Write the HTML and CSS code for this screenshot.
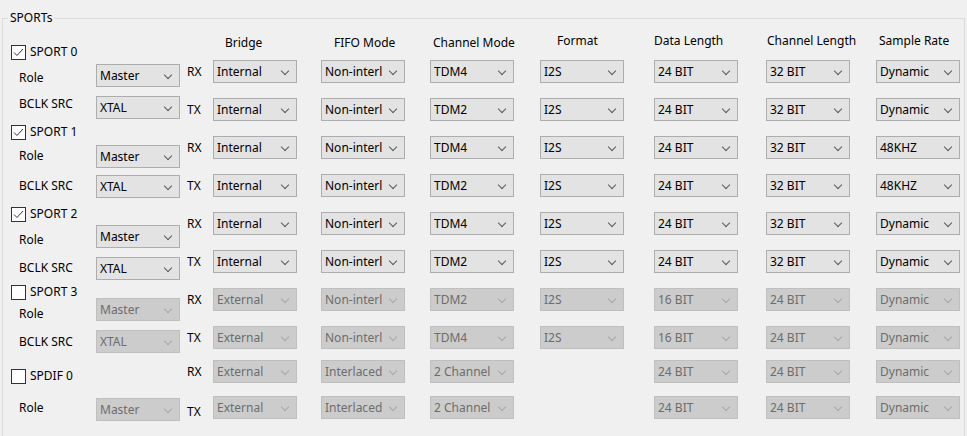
FILE: index.html
```html
<!DOCTYPE html>
<html>
<head>
<meta charset="utf-8">
<link rel="stylesheet" href="styles.css">
</head>
<body>
<div class="group">
  <div class="group-title">SPORTs</div>
  <div class="group-body">
    <div class="left-labels">
      <div class="chk"><span class="box"><svg viewBox="0 0 13 13" width="13" height="13"><polyline points="2,6.5 5,9.5 11,3" /></svg></span>SPORT 0</div>
      <div class="lbl">Role</div>
      <div class="lbl">BCLK SRC</div>
      <div class="chk"><span class="box"><svg viewBox="0 0 13 13" width="13" height="13"><polyline points="2,6.5 5,9.5 11,3" /></svg></span>SPORT 1</div>
      <div class="lbl">Role</div>
      <div class="lbl">BCLK SRC</div>
      <div class="chk"><span class="box"><svg viewBox="0 0 13 13" width="13" height="13"><polyline points="2,6.5 5,9.5 11,3" /></svg></span>SPORT 2</div>
      <div class="lbl">Role</div>
      <div class="lbl">BCLK SRC</div>
      <div class="chk"><span class="box"></span>SPORT 3</div>
      <div class="lbl">Role</div>
      <div class="lbl">BCLK SRC</div>
      <div class="chk"><span class="box"></span>SPDIF 0</div>
      <div class="lbl">Role</div>
    </div>
    <div class="left-combos">
      <div class="combo"><span>Master</span><i></i></div>
      <div class="combo"><span>XTAL</span><i></i></div>
      <div class="combo"><span>Master</span><i></i></div>
      <div class="combo"><span>XTAL</span><i></i></div>
      <div class="combo"><span>Master</span><i></i></div>
      <div class="combo"><span>XTAL</span><i></i></div>
      <div class="combo off"><span>Master</span><i></i></div>
      <div class="combo off"><span>XTAL</span><i></i></div>
      <div class="combo off"><span>Master</span><i></i></div>
    </div>
    <div class="matrix">
      <div></div>
      <div class="h h-bridge">Bridge</div>
      <div class="h h-fifo">FIFO Mode</div>
      <div class="h h-chmode">Channel Mode</div>
      <div class="h h-format">Format</div>
      <div class="h h-dlen">Data Length</div>
      <div class="h h-clen">Channel Length</div>
      <div class="h h-rate">Sample Rate</div>

      <div class="dir">RX</div>
      <div class="combo"><span>Internal</span><i></i></div>
      <div class="combo"><span>Non-interl</span><i></i></div>
      <div class="combo"><span>TDM4</span><i></i></div>
      <div class="combo"><span>I2S</span><i></i></div>
      <div class="combo"><span>24 BIT</span><i></i></div>
      <div class="combo"><span>32 BIT</span><i></i></div>
      <div class="combo"><span>Dynamic</span><i></i></div>

      <div class="dir">TX</div>
      <div class="combo"><span>Internal</span><i></i></div>
      <div class="combo"><span>Non-interl</span><i></i></div>
      <div class="combo"><span>TDM2</span><i></i></div>
      <div class="combo"><span>I2S</span><i></i></div>
      <div class="combo"><span>24 BIT</span><i></i></div>
      <div class="combo"><span>32 BIT</span><i></i></div>
      <div class="combo"><span>Dynamic</span><i></i></div>

      <div class="dir">RX</div>
      <div class="combo"><span>Internal</span><i></i></div>
      <div class="combo"><span>Non-interl</span><i></i></div>
      <div class="combo"><span>TDM4</span><i></i></div>
      <div class="combo"><span>I2S</span><i></i></div>
      <div class="combo"><span>24 BIT</span><i></i></div>
      <div class="combo"><span>32 BIT</span><i></i></div>
      <div class="combo"><span>48KHZ</span><i></i></div>

      <div class="dir">TX</div>
      <div class="combo"><span>Internal</span><i></i></div>
      <div class="combo"><span>Non-interl</span><i></i></div>
      <div class="combo"><span>TDM2</span><i></i></div>
      <div class="combo"><span>I2S</span><i></i></div>
      <div class="combo"><span>24 BIT</span><i></i></div>
      <div class="combo"><span>32 BIT</span><i></i></div>
      <div class="combo"><span>48KHZ</span><i></i></div>

      <div class="dir">RX</div>
      <div class="combo"><span>Internal</span><i></i></div>
      <div class="combo"><span>Non-interl</span><i></i></div>
      <div class="combo"><span>TDM4</span><i></i></div>
      <div class="combo"><span>I2S</span><i></i></div>
      <div class="combo"><span>24 BIT</span><i></i></div>
      <div class="combo"><span>32 BIT</span><i></i></div>
      <div class="combo"><span>Dynamic</span><i></i></div>

      <div class="dir">TX</div>
      <div class="combo"><span>Internal</span><i></i></div>
      <div class="combo"><span>Non-interl</span><i></i></div>
      <div class="combo"><span>TDM2</span><i></i></div>
      <div class="combo"><span>I2S</span><i></i></div>
      <div class="combo"><span>24 BIT</span><i></i></div>
      <div class="combo"><span>32 BIT</span><i></i></div>
      <div class="combo"><span>Dynamic</span><i></i></div>

      <div class="dir">RX</div>
      <div class="combo off"><span>External</span><i></i></div>
      <div class="combo off"><span>Non-interl</span><i></i></div>
      <div class="combo off"><span>TDM2</span><i></i></div>
      <div class="combo off"><span>I2S</span><i></i></div>
      <div class="combo off"><span>16 BIT</span><i></i></div>
      <div class="combo off"><span>24 BIT</span><i></i></div>
      <div class="combo off"><span>Dynamic</span><i></i></div>

      <div class="dir">TX</div>
      <div class="combo off"><span>External</span><i></i></div>
      <div class="combo off"><span>Non-interl</span><i></i></div>
      <div class="combo off"><span>TDM4</span><i></i></div>
      <div class="combo off"><span>I2S</span><i></i></div>
      <div class="combo off"><span>16 BIT</span><i></i></div>
      <div class="combo off"><span>24 BIT</span><i></i></div>
      <div class="combo off"><span>Dynamic</span><i></i></div>

      <div class="dir">RX</div>
      <div class="combo off"><span>External</span><i></i></div>
      <div class="combo off"><span>Interlaced</span><i></i></div>
      <div class="combo off"><span>2 Channel</span><i></i></div>
      <div></div>
      <div class="combo off"><span>24 BIT</span><i></i></div>
      <div class="combo off"><span>24 BIT</span><i></i></div>
      <div class="combo off"><span>Dynamic</span><i></i></div>

      <div class="dir dir-low">TX</div>
      <div class="combo off"><span>External</span><i></i></div>
      <div class="combo off"><span>Interlaced</span><i></i></div>
      <div class="combo off"><span>2 Channel</span><i></i></div>
      <div></div>
      <div class="combo off"><span>24 BIT</span><i></i></div>
      <div class="combo off"><span>24 BIT</span><i></i></div>
      <div class="combo off"><span>Dynamic</span><i></i></div>
    </div>
  </div>
</div>
</body>
</html>
```
FILE: styles.css
```css
* { box-sizing: border-box; }
html, body {
  margin: 0;
  padding: 0;
  background: #f0f0f0;
  overflow: hidden;
}
body {
  font-family: "Noto Sans", "Open Sans", sans-serif;
  font-size: 12px;
  color: #000;
  width: 967px;
  height: 436px;
}
.group {
  position: relative;
  margin: 18px 2px 0 2px;
  height: 418px;
  border: 1px solid #dcdcdc;
  border-bottom: none;
}
.group-title {
  position: absolute;
  top: -9px;
  left: 5px;
  padding: 0 2px;
  line-height: 16px;
  background: #f0f0f0;
}
.group-body {
  display: flex;
  align-items: flex-start;
  padding-left: 8px;
}

/* left: checkbox + labels */
.left-labels {
  width: 85px;
  margin-top: 25px;
  display: flex;
  flex-direction: column;
}
.left-labels > div { height: 16px; line-height: 16px; white-space: nowrap; }
.left-labels > :nth-child(2) { margin-top: 10px; }
.left-labels > :nth-child(3) { margin-top: 10px; }
.left-labels > :nth-child(4) { margin-top: 12px; }
.left-labels > :nth-child(5) { margin-top: 8px; }
.left-labels > :nth-child(6) { margin-top: 14px; }
.left-labels > :nth-child(7) { margin-top: 12px; }
.left-labels > :nth-child(8) { margin-top: 10px; }
.left-labels > :nth-child(9) { margin-top: 12px; }
.left-labels > :nth-child(10) { margin-top: 8px; }
.left-labels > :nth-child(11) { margin-top: 6px; }
.left-labels > :nth-child(12) { margin-top: 12px; }
.left-labels > :nth-child(13) { margin-top: 18px; }
.left-labels > :nth-child(14) { margin-top: 16px; }

.chk {
  display: flex;
  align-items: center;
}
.box {
  width: 15px;
  height: 15px;
  border: 1px solid #333;
  background: #fff;
  margin-right: 4px;
  display: flex;
}
.box svg { display: block; }
.box polyline {
  fill: none;
  stroke: #333;
  stroke-width: 1;
}
.lbl { padding-left: 8px; }

/* left combos */
.left-combos {
  width: 84px;
  margin-top: 45px;
  display: flex;
  flex-direction: column;
}
.left-combos > :nth-child(2) { margin-top: 9px; }
.left-combos > :nth-child(3) { margin-top: 26px; }
.left-combos > :nth-child(4) { margin-top: 7px; }
.left-combos > :nth-child(5) { margin-top: 27px; }
.left-combos > :nth-child(6) { margin-top: 9px; }
.left-combos > :nth-child(7) { margin-top: 18px; }
.left-combos > :nth-child(8) { margin-top: 9px; }
.left-combos > :nth-child(9) { margin-top: 45px; }

/* combobox */
.combo {
  position: relative;
  width: 84px;
  height: 23px;
  border: 1px solid #adadad;
  background: #e3e3e3;
  display: flex;
  align-items: center;
  padding-left: 3px;
  line-height: 16px;
  white-space: nowrap;
}
.combo i {
  position: absolute;
  right: 8px;
  top: 7px;
  width: 6px;
  height: 6px;
  border-right: 1px solid #5a5a5a;
  border-bottom: 1px solid #5a5a5a;
  transform: rotate(45deg);
}
.combo.off {
  background: #cccccc;
  border-color: #bfbfbf;
  color: #6d6d6d;
}
.combo.off i {
  border-color: #a8a8a8;
}

/* matrix */
.matrix {
  margin-left: 7px;
  margin-top: 14px;
  display: grid;
  grid-template-columns: 26px 108px 109px 110px 114px 112px 110px 84px;
  grid-template-rows: 27px repeat(7, 38px) 34px 36px 23px;
  align-items: start;
}
.h { line-height: 16px; white-space: nowrap; }
.h-bridge { padding: 2px 0 0 12px; }
.h-fifo { padding: 2px 0 0 13px; }
.h-chmode { padding: 2px 0 0 3px; }
.h-format { padding: 0 0 0 17px; }
.h-dlen { padding: 0 0 0 0; }
.h-clen { padding: 0 0 0 1px; }
.h-rate { padding: 0 0 0 3px; }
.dir { line-height: 23px; }
.dir-low { padding-top: 4px; }
```
